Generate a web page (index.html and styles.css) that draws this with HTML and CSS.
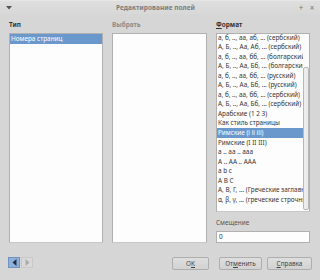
FILE: index.html
```html
<!DOCTYPE html>
<html>
<head>
<meta charset="utf-8">
<link rel="stylesheet" href="styles.css">
</head>
<body>
<div class="dialog">
  <div class="titlebar">
    <span class="menu-btn"><svg width="6" height="4" viewBox="0 0 6 4"><path d="M0 0H6L3 3.5Z" fill="#555"/></svg></span>
    <span class="title">Редактирование полей</span>
    <span class="win-btns"><span class="wb">+</span><span class="wb">×</span></span>
  </div>
  <div class="body">
    <div class="columns">
      <div class="col">
        <div class="label">Тип</div>
        <div class="list tall">
          <div class="row sel">Номера страниц</div>
        </div>
      </div>
      <div class="col">
        <div class="label dim">Выбрать</div>
        <div class="list tall"></div>
      </div>
      <div class="col">
        <div class="label"><u>Ф</u>ормат</div>
        <div class="list fmt">
          <div class="rows">
            <div class="row">а, б, .., аа, аб, ... (сербский)</div>
            <div class="row">А, Б, .., Аа, Аб, ... (сербский)</div>
            <div class="row">а, б, .., аа, бб, ... (болгарский)</div>
            <div class="row">А, Б, .., Аа, Бб, ... (болгарский)</div>
            <div class="row">а, б, .., аа, бб, ... (русский)</div>
            <div class="row">А, Б, .., Аа, Бб, ... (русский)</div>
            <div class="row">а, б, .., аа, бб, ... (сербский)</div>
            <div class="row">А, Б, .., Аа, Бб, ... (сербский)</div>
            <div class="row">Арабские (1 2 3)</div>
            <div class="row">Как стиль страницы</div>
            <div class="row sel">Римские (i ii iii)</div>
            <div class="row">Римские (I II III)</div>
            <div class="row">a .. aa .. aaa</div>
            <div class="row">A .. AA .. AAA</div>
            <div class="row">a b c</div>
            <div class="row">A B C</div>
            <div class="row">Α, Β, Γ, ... (Греческие заглавные)</div>
            <div class="row">α, β, γ, ... (греческие строчные)</div>
          </div>
          <div class="scrollbar"><div class="thumb"></div></div>
        </div>
        <div class="label2">Смещение</div>
        <div class="input">0</div>
      </div>
    </div>
    <div class="footer">
      <div class="nav">
        <span class="nav-btn prev"><svg width="5" height="7" viewBox="0 0 5 7"><path d="M4.5 0V7L0.5 3.5Z" fill="#1f2f45"/></svg></span>
        <span class="nav-btn next"><svg width="5" height="7" viewBox="0 0 5 7"><path d="M0.5 0V7L4.5 3.5Z" fill="#aaaaaa"/></svg></span>
      </div>
      <div class="buttons">
        <span class="btn ok">O<u>K</u></span>
        <span class="btn cancel">От<u>м</u>енить</span>
        <span class="btn help"><u>С</u>правка</span>
      </div>
    </div>
  </div>
</div>
</body>
</html>
```
FILE: styles.css
```css
* { box-sizing: border-box; }
html, body { margin: 0; padding: 0; }
body {
  width: 320px;
  height: 280px;
  overflow: hidden;
  background: #d6d6d6;
  font-family: "Noto Sans", "Open Sans", sans-serif;
  font-size: 6.4px;
  color: #333;
}
.dialog {
  width: 320px;
  height: 280px;
  display: flex;
  flex-direction: column;
  background: #d6d6d6;
}
.titlebar {
  height: 14px;
  display: flex;
  align-items: center;
  padding: 0 5px 0 5px;
  background: linear-gradient(#dedede, #d8d8d8);
  border-top: 1px solid #e6e6e6;
}
.menu-btn { width: 8px; display: flex; align-items: center; justify-content: center; }
.title {
  flex: 1;
  text-align: center;
  font-weight: bold;
  color: #7d7d7d;
  font-size: 6.6px;
}
.win-btns { display: flex; gap: 5px; color: #777; font-size: 8px; line-height: 10px; }
.wb { width: 6px; text-align: center; }
.body {
  flex: 1;
  display: flex;
  flex-direction: column;
  padding: 6px 10px 0 9px;
}
.columns {
  display: grid;
  grid-template-columns: 94px 95px 94px;
  column-gap: 9px;
  height: 223px;
}
.col { display: flex; flex-direction: column; }
.label {
  height: 13px;
  line-height: 10px;
  font-weight: bold;
  color: #333;
}
.label u { text-decoration-thickness: 1px; text-underline-offset: 1px; }
.label.dim { color: #8c8c8c; }
.list {
  background: #fdfdfd;
  border: 1px solid #b0b0b0;
  border-bottom-color: #c8c8c8;
  overflow: hidden;
}
.tall { height: 210px; }
.row {
  height: 9.56px;
  line-height: 9.56px;
  padding-left: 1px;
  white-space: nowrap;
  overflow: hidden;
  color: #333;
}
.row.sel { background: #6b98cc; color: #fff; }
.fmt {
  height: 179px;
  display: flex;
}
.rows { flex: 1; min-width: 0; margin-top: -1.5px; }
.scrollbar {
  width: 6px;
  flex: none;
  padding: 33px 0 1px 0;
  background: #fbfbfb;
}
.thumb {
  height: 143px;
  border: 1px solid #b8b8b8;
  border-radius: 2px;
  background: #ececec;
}
.label2 {
  margin-top: 6px;
  height: 13px;
  line-height: 10px;
  color: #555;
}
.input {
  height: 12px;
  background: #fdfdfd;
  border: 1px solid #b0b0b0;
  line-height: 10px;
  padding-left: 2px;
  color: #333;
}
.footer {
  margin-top: 14px;
  display: flex;
  align-items: flex-start;
  justify-content: space-between;
}
.nav { display: flex; margin-left: -1px; }
.nav-btn {
  width: 12px;
  height: 11px;
  display: flex;
  align-items: center;
  justify-content: center;
}
.prev { background: #8eb0d9; border: 1px solid #6e93c2; }
.next { background: #d9d9d9; border: 1px solid #c8c8c8; margin-left: 1px; }
.buttons { display: flex; }
.btn {
  height: 13px;
  line-height: 11px;
  text-align: center;
  border: 1px solid #aeaeae;
  border-radius: 2px;
  background: linear-gradient(#dedede, #d2d2d2);
  color: #444;
}
.btn u { text-decoration-thickness: 1px; }
.ok { width: 37px; }
.cancel { width: 43px; margin-left: 10px; }
.help { width: 45px; margin-left: 5px; margin-right: -2px; }
```
